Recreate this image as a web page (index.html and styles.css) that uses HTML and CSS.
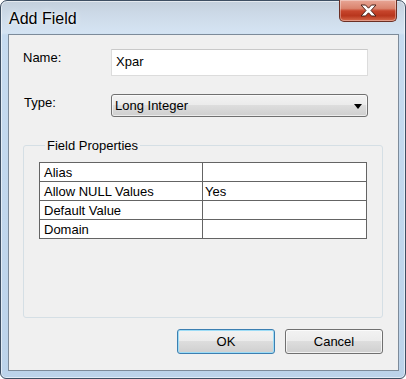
FILE: index.html
```html
<!DOCTYPE html>
<html lang="en">
<head>
    <meta charset="UTF-8">
    <title>Add Field</title>
    <link rel="stylesheet" href="styles.css">
</head>
<body>

<div class="window">
    <div class="titlebar">
        <span class="title">Add Field</span>
        <button class="close-btn" type="button">
            <svg width="17" height="13" viewBox="0 0 17 13">
                <polygon points="1,1 5.5,1 8.5,4.2 11.5,1 16,1 11,6.5 16,12 11.5,12 8.5,8.8 5.5,12 1,12 6,6.5"
                         fill="#fff" stroke="#4a2018" stroke-width="1" stroke-linejoin="round"/>
            </svg>
        </button>
    </div>

    <div class="client">
        <div class="form-row">
            <label class="field-label">Name:</label>
            <div class="textbox">Xpar</div>
        </div>
        <div class="form-row row-type">
            <label class="field-label">Type:</label>
            <div class="combo">
                <span>Long Integer</span>
                <span class="combo-arrow"></span>
            </div>
        </div>

        <div class="group">
            <span class="group-title">Field Properties</span>
            <table class="props">
                <colgroup>
                    <col class="col-name">
                    <col>
                </colgroup>
                <tr><td>Alias</td><td class="val"></td></tr>
                <tr><td>Allow NULL Values</td><td class="val">Yes</td></tr>
                <tr><td>Default Value</td><td class="val"></td></tr>
                <tr><td>Domain</td><td class="val"></td></tr>
            </table>
        </div>

        <div class="buttons">
            <button class="btn btn-default" type="button">OK</button>
            <button class="btn" type="button">Cancel</button>
        </div>
    </div>
</div>

</body>
</html>
```

FILE: styles.css
```css
html, body {
    margin: 0;
    padding: 0;
    background: #fff;
}

body {
    font-family: "Liberation Sans", Arial, sans-serif;
    font-size: 13px;
    color: #000;
}

/* Aero style window frame */
.window {
    width: 406px;
    height: 379px;
    box-sizing: border-box;
    border: 1px solid #3e4f63;
    border-radius: 7px 7px 6px 6px;
    padding: 0 6px 7px 7px;
    display: flex;
    flex-direction: column;
    background: linear-gradient(to bottom, #c3cfdc 0, #ccd9e7 12px, #d5e4f3 32px, #c6dbf0 34px, #bcd3ea 100%);
    box-shadow: inset 0 0 0 1px rgba(255, 255, 255, 0.55);
}

.titlebar {
    height: 33px;
    display: flex;
    align-items: flex-start;
}

.title {
    padding: 8px 0 0 1px;
    font-size: 16px;
    line-height: 19px;
    color: #000;
    text-shadow: 0 0 6px rgba(255, 255, 255, 0.9), 0 0 2px rgba(255, 255, 255, 0.8);
}

.close-btn {
    margin: -1px 2px 0 auto;
    width: 58px;
    height: 22px;
    padding: 0;
    border: 1px solid #6b2f24;
    border-top: none;
    border-radius: 0 0 5px 5px;
    display: flex;
    align-items: center;
    justify-content: center;
    background: linear-gradient(to bottom, #e8a696 0%, #da846e 40%, #c7452c 52%, #b8361d 75%, #d76a4c 100%);
    box-shadow: inset 0 0 0 1px rgba(255, 255, 255, 0.35);
}

.client {
    flex: 1;
    display: flex;
    flex-direction: column;
    border: 1px solid #7d8b9a;
    background: #f0f0f0;
    padding: 14px 15px 16px 14px;
}

.form-row {
    display: flex;
    align-items: flex-start;
}

.field-label {
    width: 88px;
    padding-top: 1px;
    line-height: 15px;
}

.row-type {
    margin-top: 18px;
}

.row-type .field-label {
    padding-left: 1px;
    width: 87px;
}

.textbox {
    width: 257px;
    height: 27px;
    box-sizing: border-box;
    border: 1px solid #dcdcdc;
    border-top-color: #c9c9c9;
    background: #fff;
    padding-left: 4px;
    line-height: 24px;
}

.combo {
    width: 257px;
    height: 23px;
    box-sizing: border-box;
    border: 1px solid #707070;
    border-radius: 3px;
    padding: 0 5px 0 3px;
    display: flex;
    align-items: center;
    justify-content: space-between;
    line-height: 15px;
    background: linear-gradient(to bottom, #f2f2f2 0, #ebebeb 50%, #dddddd 50%, #cfcfcf 100%);
    box-shadow: inset 0 0 0 1px rgba(255, 255, 255, 0.6);
}

.combo-arrow {
    width: 0;
    height: 0;
    border-left: 4px solid transparent;
    border-right: 4px solid transparent;
    border-top: 5px solid #000;
    margin-top: 1px;
}

/* group box */
.group {
    flex: 1;
    margin-top: 28px;
    border: 1px solid #d5dfe5;
    border-radius: 3px;
    padding: 0 15px;
}

.group-title {
    display: block;
    width: fit-content;
    margin: -8px 0 0 6px;
    padding: 0 2px;
    background: #f0f0f0;
    line-height: 15px;
}

.props {
    width: 100%;
    margin-top: 9px;
    border-collapse: collapse;
    background: #fff;
}

.props .col-name {
    width: 163px;
}

.props td {
    border: 1px solid #646464;
    height: 18px;
    padding: 0 4px;
    line-height: 15px;
    white-space: nowrap;
}

.props td.val {
    padding-left: 2px;
}

.buttons {
    display: flex;
    justify-content: flex-end;
    gap: 10px;
    margin-top: 11px;
}

.btn {
    width: 98px;
    height: 25px;
    box-sizing: border-box;
    border: 1px solid #707070;
    border-radius: 3px;
    font-family: "Liberation Sans", Arial, sans-serif;
    font-size: 13px;
    color: #000;
    padding: 0;
    background: linear-gradient(to bottom, #f2f2f2 0, #ebebeb 50%, #dddddd 50%, #cfcfcf 100%);
    box-shadow: inset 0 0 0 1px rgba(255, 255, 255, 0.7);
}

.btn-default {
    border-color: #3c7fb1;
    box-shadow: inset 0 0 0 1px #9ddcf6;
}
```
